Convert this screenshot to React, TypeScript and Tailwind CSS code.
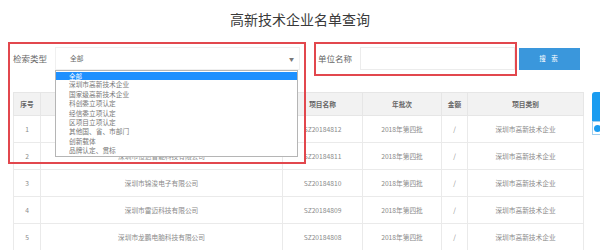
import type { ReactNode } from "react";

const OPTIONS = [
  "全部",
  "深圳市高新技术企业",
  "国家级高新技术企业",
  "科创委立项认定",
  "经信委立项认定",
  "区项目立项认定",
  "其他国、省、市部门",
  "创新载体",
  "品牌认定、贯标",
];

type Row = {
  no: number;
  company: string;
  code: string;
  batch: string;
  amount: string;
  category: string;
};

const ROWS: Row[] = [
  { no: 1, company: "深圳市华信科技有限公司", code: "SZ20184812", batch: "2018年第四批", amount: "/", category: "深圳市高新技术企业" },
  { no: 2, company: "深圳市恒达智能科技有限公司", code: "SZ20184811", batch: "2018年第四批", amount: "/", category: "深圳市高新技术企业" },
  { no: 3, company: "深圳市锦浚电子有限公司", code: "SZ20184810", batch: "2018年第四批", amount: "/", category: "深圳市高新技术企业" },
  { no: 4, company: "深圳市雷迈科技有限公司", code: "SZ20184809", batch: "2018年第四批", amount: "/", category: "深圳市高新技术企业" },
  { no: 5, company: "深圳市龙鹏电脑科技有限公司", code: "SZ20184808", batch: "2018年第四批", amount: "/", category: "深圳市高新技术企业" },
];

function Th({ children }: { children: ReactNode }) {
  return (
    <th className="border border-[#e6e6e6] text-center text-[6.7px] font-bold text-[#666]">
      {children}
    </th>
  );
}

function Td({ children }: { children: ReactNode }) {
  return (
    <td className="border border-[#eaeaea] text-center text-[6.7px] text-[#8a8a8a]">
      {children}
    </td>
  );
}

export default function App() {
  return (
    <div
      className="relative h-[250px] w-[600px] overflow-hidden bg-white"
      style={{ fontFamily: '"Noto Sans CJK SC", "Noto Sans", sans-serif' }}
    >
      <h1 className="pt-[10px] text-center text-[14px] leading-[18px] text-[#3a3a3a]">
        高新技术企业名单查询
      </h1>

      {/* search bar */}
      <div className="ml-[13px] mt-[19px] flex h-[23px] items-center">
        <span className="w-[42px] text-[8.5px] text-[#666]">检索类型</span>
        <div className="relative h-[23px] w-[245px]">
          <div className="flex h-full items-center justify-between border border-[#f0f0f0] bg-white pl-[14px] pr-[5px] text-[6.7px] text-[#666]">
            <span>全部</span>
            <span className="text-[5px] text-[#777]">▼</span>
          </div>
          <ul className="absolute left-0 top-[23px] z-10 w-[243px] border border-[#b5b5b5] bg-white py-px">
            {OPTIONS.map((o, i) => (
              <li
                key={o}
                className={
                  i === 0
                    ? "flex h-[8px] items-center overflow-hidden bg-[#1e90ff] pl-[13px] text-[6.5px] leading-none text-white"
                    : "flex h-[9.4px] items-center overflow-hidden pl-[13px] text-[6.7px] leading-none text-[#777]"
                }
              >
                {o}
              </li>
            ))}
          </ul>
        </div>

        <span className="ml-[18px] w-[42px] text-[8.5px] text-[#666]">单位名称</span>
        <div className="h-[23px] w-[155px] border border-[#ececec] bg-white" />
        <button
          type="button"
          className="ml-[4px] h-[22px] w-[61px] bg-[#3a97dc] text-[6.5px] tracking-[2px] text-white"
        >
          搜 索
        </button>
      </div>

      {/* result table */}
      <table className="ml-[13px] mt-[22px] w-[570px] table-fixed border-collapse">
        <colgroup>
          <col className="w-[27px]" />
          <col className="w-[242px]" />
          <col className="w-[80px]" />
          <col className="w-[79px]" />
          <col className="w-[26px]" />
          <col className="w-[116px]" />
        </colgroup>
        <thead>
          <tr className="h-[23px] bg-[#f2f2f2]">
            <Th>序号</Th>
            <Th>单位名称</Th>
            <Th>项目名称</Th>
            <Th>年批次</Th>
            <Th>金额</Th>
            <Th>项目类别</Th>
          </tr>
        </thead>
        <tbody>
          {ROWS.map((r) => (
            <tr key={r.no} className="h-[27px]">
              <Td>{r.no}</Td>
              <Td>{r.company}</Td>
              <Td>{r.code}</Td>
              <Td>{r.batch}</Td>
              <Td>{r.amount}</Td>
              <Td>{r.category}</Td>
            </tr>
          ))}
        </tbody>
      </table>

      {/* floating side widget */}
      <div className="absolute left-[592px] top-[92px] flex w-[10px] flex-col">
        <div className="h-[29px] rounded-tl-[3px] bg-[#1a9cf0]" />
        <div className="flex h-[14px] items-center border border-[#9fcff0] bg-white pl-px">
          <span className="h-[7px] w-[7px] rounded-full bg-[#1a9cf0]" />
        </div>
      </div>

      {/* annotation boxes */}
      <div className="pointer-events-none absolute left-[8px] top-[42px] h-[122px] w-[298px] border-2 border-[#e2474d]" />
      <div className="pointer-events-none absolute left-[314px] top-[42px] h-[34px] w-[203px] border-2 border-[#e2474d]" />
    </div>
  );
}
